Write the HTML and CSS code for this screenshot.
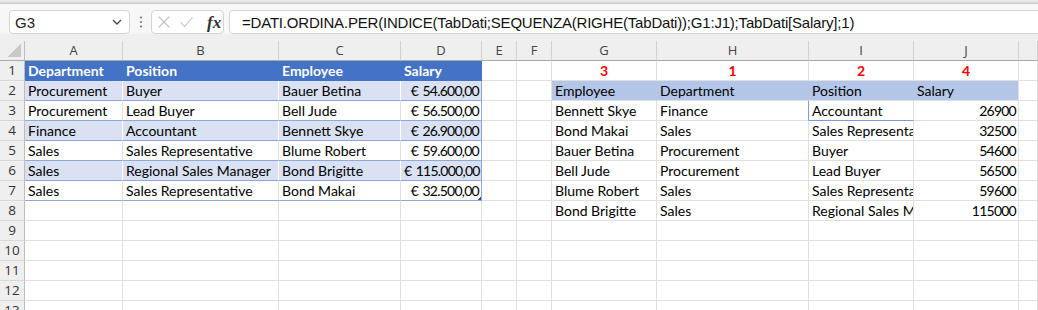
FILE: index.html
```html
<!DOCTYPE html>
<html lang="it">
<head>
    <meta charset="UTF-8">
    <meta name="viewport" content="width=device-width, initial-scale=1.0">
    <title>DATI.ORDINA.PER - TabDati</title>
    <link rel="stylesheet" href="styles.css">
</head>
<body>
    <div class="window-edge"></div>

    <div class="formula-bar">
        <div class="name-box">
            <span class="cell-ref">G3</span>
            <svg class="chevron" width="10" height="6" viewBox="0 0 10 6">
                <polyline points="1,1 5,5 9,1" fill="none" stroke="#444" stroke-width="1.3"/>
            </svg>
        </div>
        <svg class="grip" width="4" height="12" viewBox="0 0 4 12">
            <circle cx="2" cy="1.5" r="1.1"/>
            <circle cx="2" cy="6" r="1.1"/>
            <circle cx="2" cy="10.5" r="1.1"/>
        </svg>
        <div class="fx-box">
            <svg class="cancel" width="12" height="12" viewBox="0 0 12 12">
                <line x1="0.5" y1="0.5" x2="11.5" y2="11.5"/>
                <line x1="11.5" y1="0.5" x2="0.5" y2="11.5"/>
            </svg>
            <svg class="enter" width="13" height="10" viewBox="0 0 13 10">
                <polyline points="0.5,5 4.5,9.5 12.5,0.5"/>
            </svg>
            <span class="fx">fx</span>
        </div>
        <div class="formula">=DATI.ORDINA.PER(INDICE(TabDati;SEQUENZA(RIGHE(TabDati));G1:J1);TabDati[Salary];1)</div>
    </div>

    <div class="sheet" id="sheet"></div>

    <script>
        const columns = ['A', 'B', 'C', 'D', 'E', 'F', 'G', 'H', 'I', 'J', ''];

        // one entry per row: columns A..J
        const rows = [
            ['Department', 'Position', 'Employee', 'Salary', '', '', '3', '1', '2', '4'],
            ['Procurement', 'Buyer', 'Bauer Betina', '€ 54.600,00', '', '', 'Employee', 'Department', 'Position', 'Salary'],
            ['Procurement', 'Lead Buyer', 'Bell Jude', '€ 56.500,00', '', '', 'Bennett Skye', 'Finance', 'Accountant', '26900'],
            ['Finance', 'Accountant', 'Bennett Skye', '€ 26.900,00', '', '', 'Bond Makai', 'Sales', 'Sales Representative', '32500'],
            ['Sales', 'Sales Representative', 'Blume Robert', '€ 59.600,00', '', '', 'Bauer Betina', 'Procurement', 'Buyer', '54600'],
            ['Sales', 'Regional Sales Manager', 'Bond Brigitte', '€ 115.000,00', '', '', 'Bell Jude', 'Procurement', 'Lead Buyer', '56500'],
            ['Sales', 'Sales Representative', 'Bond Makai', '€ 32.500,00', '', '', 'Blume Robert', 'Sales', 'Sales Representative', '59600'],
            ['', '', '', '', '', '', 'Bond Brigitte', 'Sales', 'Regional Sales Manager', '115000'],
            [], [], [], [], []
        ];

        const sheet = document.getElementById('sheet');

        function addCell(text, className) {
            const cell = document.createElement('div');
            cell.className = className;
            cell.textContent = text;
            sheet.appendChild(cell);
        }

        function cellClasses(r, c) {
            const classes = ['cell'];
            // source table A1:D7
            if (c <= 3 && r <= 7) {
                classes.push('tbl');
                if (r === 1) classes.push('tbl-head');
                else if (r % 2 === 0) classes.push('band');
                if (c === 3) classes.push('tbl-end');
                if (c === 3 && r > 1) classes.push('num');
                if (c === 3 && r === 7) classes.push('handle');
            }
            // sort order G1:J1 and result G2:J8
            if (c >= 6 && c <= 9) {
                if (r === 1) classes.push('order');
                if (r === 2) classes.push('res-head');
                if (c === 9 && r > 2) classes.push('num');
                if (c === 9 && r === 2) classes.push('res-last');
            }
            if (r === 3 && c === 7) classes.push('sel-left');
            if (r === 3 && c === 8) classes.push('sel-bottom');
            return classes.join(' ');
        }

        addCell('', 'spacer');
        addCell('', 'corner');
        columns.forEach(col => addCell(col, 'col-head'));

        rows.forEach((row, i) => {
            const r = i + 1;
            addCell(r, 'row-head');
            columns.forEach((col, c) => addCell(row[c] || '', cellClasses(r, c)));
        });
    </script>
</body>
</html>
```

FILE: styles.css
```css
body {
    margin: 0;
    width: 1038px;
    height: 310px;
    overflow: hidden;
    background-color: #ffffff;
    font-family: 'Liberation Sans', Arial, sans-serif;
}

.window-edge {
    height: 3px;
    background: linear-gradient(#f0f0f0, #d8d8d8);
    border-bottom: 1px solid #cccccc;
}

.formula-bar {
    display: flex;
    align-items: flex-end;
    height: 30px;
    background-color: #f7f7f7;
    overflow: hidden;
}

.name-box,
.fx-box,
.formula {
    box-sizing: border-box;
    height: 24px;
    background-color: #ffffff;
    border: 1px solid #d4d4d4;
    border-radius: 4px;
    display: flex;
    align-items: center;
}

.name-box {
    width: 121px;
    margin-left: 9px;
    padding: 0 7px 0 5px;
    justify-content: space-between;
}

.cell-ref {
    font-size: 15px;
    color: #222;
}

.grip {
    fill: #7a7a7a;
    margin: 0 8px 6px 9px;
}

.fx-box {
    width: 73px;
    padding-left: 6px;
}

.cancel line,
.enter polyline {
    fill: none;
    stroke: #c2c2c2;
    stroke-width: 1.1;
}

.enter {
    margin-left: 10px;
}

.fx {
    margin-left: 14px;
    font-family: 'Liberation Serif', 'Times New Roman', serif;
    font-style: italic;
    font-weight: bold;
    font-size: 17px;
    color: #333;
    line-height: 1;
}

.formula {
    flex: 1;
    margin-left: 5px;
    margin-right: -10px;
    padding-left: 12px;
    border-radius: 4px 0 0 4px;
    font-size: 15px;
    letter-spacing: -0.2px;
    color: #111;
    white-space: nowrap;
}

.sheet {
    display: grid;
    grid-template-columns: 25px 98px 156px 122px 81px 35px 35px 105px 152px 105px 105px 1fr;
    grid-template-rows: 7px 20px;
    grid-auto-rows: 20px;
    background-color: #ffffff;
}

.spacer {
    grid-column: 1 / -1;
    background-color: #efefef;
}

.corner,
.col-head,
.row-head {
    box-sizing: border-box;
    background-color: #efefef;
    color: #444;
    font-family: 'Open Sans', sans-serif;
    font-size: 13px;
    text-align: center;
    line-height: 19px;
}

.corner {
    border-right: 1px solid #bdbdbd;
    border-bottom: 1px solid #a9a9a9;
    background-image: linear-gradient(to top left, #c9c9c9 50%, transparent 50%);
    background-repeat: no-repeat;
    background-size: 13px 13px;
    background-position: right 3px bottom 3px;
}

.col-head {
    border-right: 1px solid #d2d2d2;
    border-bottom: 1px solid #a9a9a9;
}

.row-head {
    border-right: 1px solid #bdbdbd;
    border-bottom: 1px solid #d8d8d8;
    font-size: 13.5px;
    color: #333;
}

.cell {
    box-sizing: border-box;
    border-right: 1px solid #e0e0e0;
    border-bottom: 1px solid #e0e0e0;
    padding: 0 3px;
    font-family: Lato, 'Liberation Sans', sans-serif;
    font-size: 14px;
    line-height: 20px;
    color: #000;
    white-space: nowrap;
    overflow: hidden;
}

.num {
    text-align: right;
    padding-right: 2px;
    letter-spacing: -0.75px;
    word-spacing: 1.5px;
}

.tbl {
    border-bottom-color: #8ea9db;
}

.tbl-head {
    background-color: #4472c4;
    border-right-color: #4472c4;
    border-bottom-color: #4472c4;
    color: #ffffff;
    font-weight: bold;
}

.band {
    background-color: #d9e1f2;
    border-right-color: #ffffff;
}

.tbl-end {
    border-right-color: #8ea9db;
}

.tbl-head.tbl-end {
    border-right-color: #4472c4;
}

.handle {
    background-image: linear-gradient(to top left, #2f5597 50%, transparent 50%);
    background-repeat: no-repeat;
    background-size: 4px 4px;
    background-position: right bottom;
}

.order {
    color: #ff0000;
    font-weight: bold;
    text-align: center;
}

.res-head {
    background-color: #b4c6e7;
    border-right-color: #b4c6e7;
}

.res-last {
    border-right-color: #e0e0e0;
}

.sel-left {
    border-right-color: #7b9bd3;
}

.sel-bottom {
    border-bottom-color: #7b9bd3;
}
```
